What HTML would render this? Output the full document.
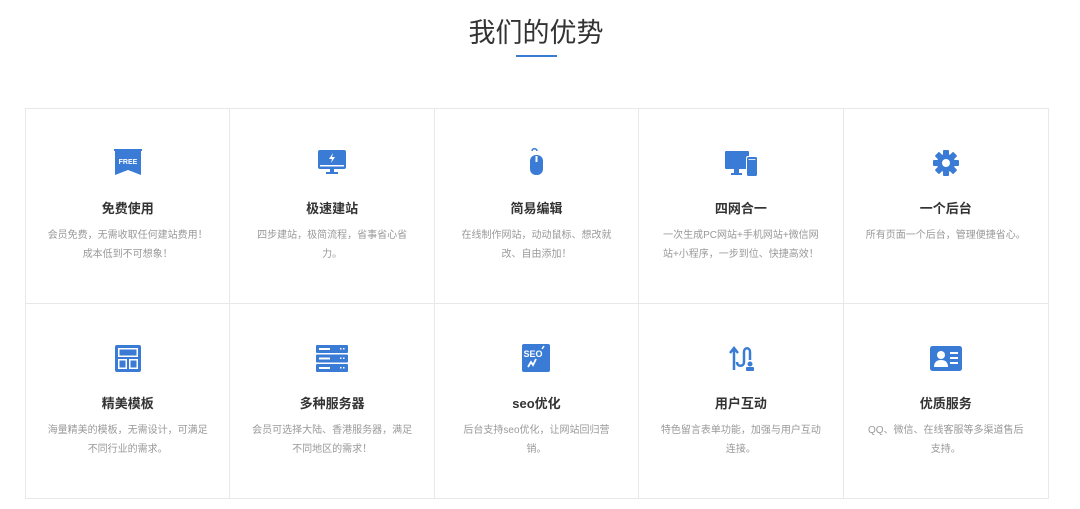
<!DOCTYPE html>
<html><head><meta charset="utf-8"><style>
*{margin:0;padding:0;box-sizing:border-box}
body{width:1080px;height:509px;background:#fff;font-family:"Liberation Sans","Noto Sans CJK SC",sans-serif;position:relative;overflow:hidden}
h1{position:absolute;top:15px;left:0;width:1072px;text-align:center;font-size:27px;font-weight:normal;color:#333;line-height:36px}
.ul{position:absolute;left:516px;top:55px;width:41px;height:2px;background:#3a7bd5}
.grid{position:absolute;left:25px;top:108px;width:1024px;height:391px;border:1px solid #e8e8e8;display:grid;grid-template-columns:repeat(5,1fr);grid-template-rows:195px 195px}
.c{border-right:1px solid #e8e8e8;border-bottom:1px solid #e8e8e8;position:relative;text-align:center}
.c:nth-child(5n){border-right:none}.c:nth-child(n+6){border-bottom:none}
.ic{position:absolute;left:50%;top:38px;transform:translateX(-50%);width:32px;height:32px}
.t{position:absolute;top:89px;left:0;right:0;font-size:13px;font-weight:bold;color:#333}
.d{position:absolute;top:117px;left:21px;right:21px;font-size:10px;color:#999;line-height:19px}
</style></head><body>
<h1>我们的优势</h1><div class="ul"></div>
<div class="grid">
<div class="c"><svg class="ic" viewBox="0 0 32 32"><path d="M3 2h26v26l-13-5-13 5z" fill="#3a7bd5"/><rect x="2" y="2" width="28" height="2" fill="#3a7bd5"/><text x="16" y="17" font-size="7" font-weight="bold" fill="#fff" text-anchor="middle" font-family="Liberation Sans">FREE</text></svg><div class="t">免费使用</div><div class="d">会员免费，无需收取任何建站费用！成本低到不可想象！</div></div>
<div class="c"><svg class="ic" viewBox="0 0 32 32"><rect x="2" y="3" width="28" height="19" rx="2" fill="#3a7bd5"/><rect x="4" y="18" width="24" height="1.5" fill="#fff"/><path d="M17 6l-4 6h3l-1 4 4-6h-3z" fill="#fff"/><rect x="14" y="22" width="4" height="4" fill="#3a7bd5"/><rect x="10" y="25" width="12" height="2" fill="#3a7bd5"/></svg><div class="t">极速建站</div><div class="d">四步建站，极简流程，省事省心省力。</div></div>
<div class="c"><svg class="ic" viewBox="0 0 32 32"><path d="M12 4c0-3 5-3 5 0" stroke="#3a7bd5" fill="none" stroke-width="1.5"/><rect x="10" y="8" width="13" height="20" rx="6" fill="#3a7bd5"/><rect x="15.5" y="9" width="2" height="6" fill="#fff"/></svg><div class="t">简易编辑</div><div class="d">在线制作网站，动动鼠标、想改就改、自由添加！</div></div>
<div class="c"><svg class="ic" viewBox="0 0 32 32"><rect x="0" y="4" width="24" height="18" rx="1" fill="#3a7bd5"/><rect x="9" y="22" width="5" height="4" fill="#3a7bd5"/><rect x="6" y="26" width="11" height="2" fill="#3a7bd5"/><rect x="21" y="9" width="12" height="21" rx="2" fill="#fff"/><rect x="22" y="10" width="10" height="19" rx="1.5" fill="#3a7bd5"/><rect x="23.5" y="12" width="7" height="0.8" fill="#fff"/></svg><div class="t">四网合一</div><div class="d">一次生成PC网站+手机网站+微信网站+小程序，一步到位、快捷高效！</div></div>
<div class="c"><svg class="ic" viewBox="0 0 32 32"><g fill="#3a7bd5" transform="translate(16 16)"><rect x="-3" y="-13" width="6" height="26" rx="1"/><rect x="-3" y="-13" width="6" height="26" rx="1" transform="rotate(45)"/><rect x="-3" y="-13" width="6" height="26" rx="1" transform="rotate(90)"/><rect x="-3" y="-13" width="6" height="26" rx="1" transform="rotate(135)"/><circle r="9"/></g><circle cx="16" cy="16" r="4" fill="#fff"/></svg><div class="t">一个后台</div><div class="d">所有页面一个后台，管理便捷省心。</div></div>
<div class="c"><svg class="ic" viewBox="0 0 32 32"><rect x="3" y="3" width="26" height="27" rx="2" fill="#3a7bd5"/><rect x="6" y="6" width="20" height="9" fill="#fff"/><rect x="6" y="17" width="9" height="10" fill="#fff"/><rect x="17" y="17" width="9" height="10" fill="#fff"/><rect x="7.5" y="7.5" width="17" height="6" fill="#3a7bd5"/><rect x="7.5" y="18.5" width="6" height="7" fill="#3a7bd5"/><rect x="18.5" y="18.5" width="6" height="7" fill="#3a7bd5"/></svg><div class="t">精美模板</div><div class="d">海量精美的模板，无需设计，可满足不同行业的需求。</div></div>
<div class="c"><svg class="ic" viewBox="0 0 32 32"><g fill="#3a7bd5"><rect x="0" y="3" width="32" height="8" rx="1"/><rect x="0" y="12.5" width="32" height="8" rx="1"/><rect x="0" y="22" width="32" height="8" rx="1"/></g><g fill="#fff"><rect x="3" y="6" width="11" height="2"/><rect x="3" y="15.5" width="11" height="2"/><rect x="3" y="25" width="11" height="2"/><rect x="24" y="6" width="1.5" height="1.5"/><rect x="27" y="6" width="1.5" height="1.5"/><rect x="24" y="15.5" width="1.5" height="1.5"/><rect x="27" y="15.5" width="1.5" height="1.5"/><rect x="24" y="25" width="1.5" height="1.5"/><rect x="27" y="25" width="1.5" height="1.5"/></g></svg><div class="t">多种服务器</div><div class="d">会员可选择大陆、香港服务器，满足不同地区的需求！</div></div>
<div class="c"><svg class="ic" viewBox="0 0 32 32"><rect x="2" y="2" width="28" height="28" rx="2" fill="#3a7bd5"/><text x="13" y="15" font-size="9" font-weight="bold" fill="#fff" text-anchor="middle" font-family="Liberation Sans">SEO</text><path d="M8 25l3-5 2 3 3-6" stroke="#fff" stroke-width="1.8" fill="none"/><path d="M22 7l2-3" stroke="#fff" stroke-width="1.5"/></svg><div class="t">seo优化</div><div class="d">后台支持seo优化，让网站回归营销。</div></div>
<div class="c"><svg class="ic" viewBox="0 0 32 32"><path d="M9 28V8M5 11l4-5 4 5" stroke="#3a7bd5" stroke-width="2.5" fill="none"/><path d="M12 20c0 5 7 5 7 0V10c0-5 6-5 6 0v8" stroke="#3a7bd5" stroke-width="2.5" fill="none"/><circle cx="25" cy="22" r="2.5" fill="#3a7bd5"/><rect x="21" y="25" width="8" height="4" rx="1" fill="#3a7bd5"/></svg><div class="t">用户互动</div><div class="d">特色留言表单功能，加强与用户互动连接。</div></div>
<div class="c"><svg class="ic" viewBox="0 0 32 32"><rect x="0" y="4" width="32" height="25" rx="2.5" fill="#3a7bd5"/><circle cx="11" cy="13" r="4" fill="#fff"/><path d="M4 25c0-5 3-7 7-7s7 2 7 7z" fill="#fff"/><rect x="20" y="10" width="8" height="2" fill="#fff"/><rect x="20" y="15" width="8" height="2" fill="#fff"/><rect x="20" y="20" width="8" height="2" fill="#fff"/></svg><div class="t">优质服务</div><div class="d">QQ、微信、在线客服等多渠道售后支持。</div></div>
</div>
</body></html>
